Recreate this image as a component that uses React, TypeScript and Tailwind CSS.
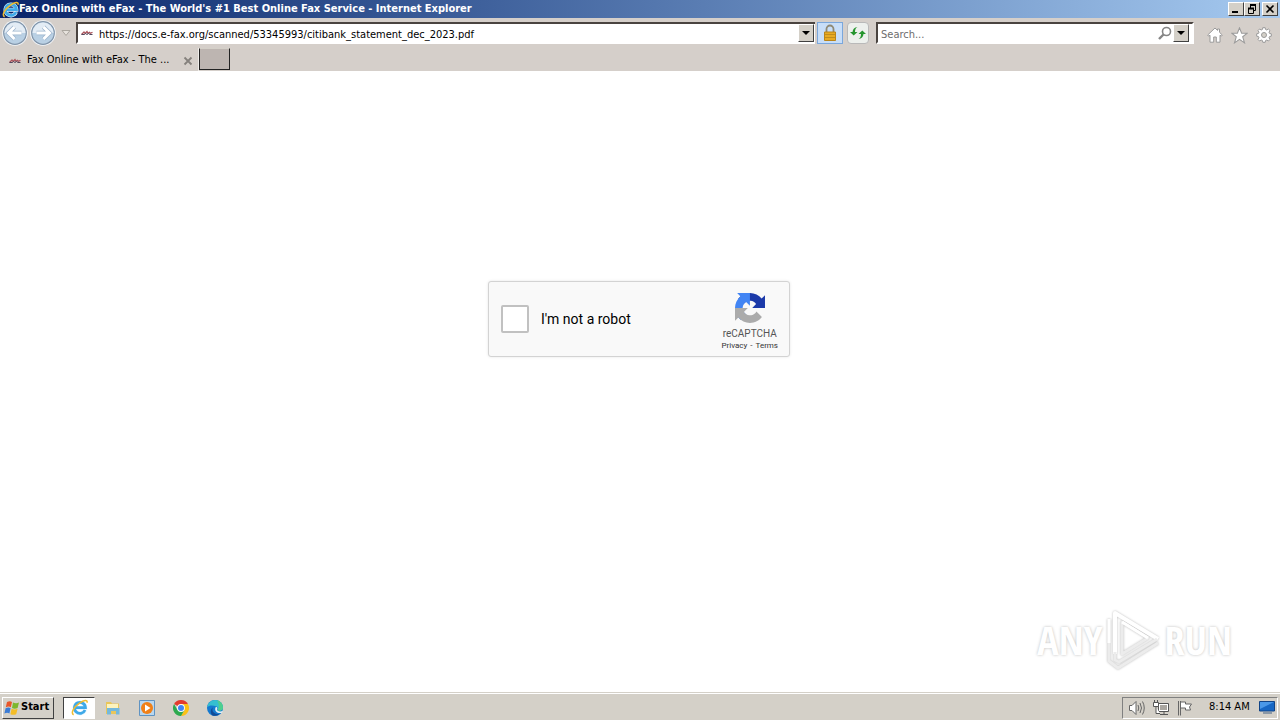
import { useState } from 'react';
import type { ReactNode } from 'react';

const raised = 'border border-t-white border-l-white border-r-[#404040] border-b-[#404040] bg-[#d4d0c8]';

function IeLogo({ className }: { className: string }) {
    return (
        <svg viewBox="0 0 16 16" className={className} aria-hidden="true">
            <path d="M13.2 10.400A5.200 5.200 0 1 1 13.600 8.200H4.500" fill="none" stroke="#e4f5ff" strokeWidth="3.600" />
            <path d="M13.2 10.400A5.200 5.200 0 1 1 13.600 8.200H4.500" fill="none" stroke="#3fa9e8" strokeWidth="2.600" />
            <path d="M2.500 14.800C-.6 13.500 2.500 7.500 8 3.800 12 1 16 .2 15 3.600" fill="none" stroke="#f0bc2e" strokeWidth="1.400" />
        </svg>
    );
}

function SiteIcon() {
    return (
        <svg viewBox="0 0 14 14" className="size-[14px] shrink-0" aria-hidden="true">
            <path d="M1.500 8.500L4 6l1 1.500L7 5.500l1 1.800 1.500-1 1 1 2-1" fill="none" stroke="#a8525a" strokeWidth="1.200" />
            <path d="M1.500 8.500h3l1-1 1.500 1 1.500-1 1.500 1h2.500" fill="none" stroke="#50485c" strokeWidth="1" />
        </svg>
    );
}

function NavButton({ label, flip }: { label: string; flip?: boolean }) {
    return (
        <button aria-label={label} className="size-[26px] shrink-0">
            <svg viewBox="0 0 26 26" className={flip ? 'size-full -scale-x-100' : 'size-full'}>
                <circle cx="13" cy="13" r="12.800" fill="#f6f9fc" />
                <circle cx="13" cy="13" r="11.300" fill="#b9d0e4" stroke="#8295aa" strokeWidth="1.200" />
                <path d="M2.500 13a10.500 10.500 0 0 1 21 0z" fill="#e3ecf5" />
                <path d="M12.500 7L6.500 13l6 6M7 13h12.500" fill="none" stroke="#9db4cc" strokeWidth="4.500" />
                <path d="M12.500 7L6.500 13l6 6M7 13h12.500" fill="none" stroke="#fff" strokeWidth="3" />
            </svg>
        </button>
    );
}

function DropButton({ label }: { label: string }) {
    return (
        <button aria-label={label} className={`flex h-[18px] w-4 shrink-0 items-center justify-center ${raised}`}>
            <svg viewBox="0 0 8 4" className="h-1 w-2">
                <path d="M0 0h8L4 4z" fill="#000" />
            </svg>
        </button>
    );
}

function CaptionButton({ label, children }: { label: string; children: ReactNode }) {
    return (
        <button aria-label={label} className={`flex h-[14px] w-4 items-center justify-center ${raised}`}>
            <svg viewBox="0 0 12 12" className="size-3 shrink-0" fill="none" stroke="#000">
                {children}
            </svg>
        </button>
    );
}

function TitleBar() {
    return (
        <header className="flex h-[18px] items-center bg-linear-to-r from-[#0a246a] to-[#a6caf0] pr-[2px] pl-[2px]">
            <IeLogo className="size-[17px] shrink-0" />
            <h1 className="flex-1 truncate text-[11px] leading-[18px] font-bold text-white">
                Fax Online with eFax - The World's #1 Best Online Fax Service - Internet Explorer
            </h1>
            <div className="flex">
                <CaptionButton label="Minimize">
                    <path d="M2 9h6" strokeWidth="2" />
                </CaptionButton>
                <CaptionButton label="Restore">
                    <path d="M4 2h6" strokeWidth="2" />
                    <path d="M4.500 2v3M9.500 2v5.500H7.500" />
                    <path d="M2 5.500h6" strokeWidth="2" />
                    <path d="M2.500 5.500v5h5v-5" />
                </CaptionButton>
                <div className="w-[2px]" />
                <CaptionButton label="Close">
                    <path d="M2.500 2.500l7 7M9.500 2.500l-7 7" strokeWidth="1.600" />
                </CaptionButton>
            </div>
        </header>
    );
}

function AddressRow() {
    return (
        <div className="flex h-[30px] items-center pr-2 pl-[2px]">
            <NavButton label="Back" />
            <div className="w-[2px]" />
            <NavButton label="Forward" flip />
            <button aria-label="Recent pages" className="flex w-5 shrink-0 justify-center">
                <svg viewBox="0 0 10 6" className="h-[6px] w-[10px]">
                    <path d="M1 .5h8l-4 5z" fill="#e6e2dc" stroke="#aaa69f" />
                </svg>
            </button>
            <div className="flex h-[22px] flex-1 items-center border-t-2 border-b-2 border-l-2 border-t-[#4a4440] border-b-white border-l-[#4a4440] bg-white pr-[1px] pl-[2px]">
                <SiteIcon />
                <input
                    aria-label="Address"
                    className="h-[18px] min-w-0 flex-1 bg-transparent pt-[2px] pl-[5px] text-[11px] text-black outline-none"
                    defaultValue="https://docs.e-fax.org/scanned/53345993/citibank_statement_dec_2023.pdf"
                />
                <DropButton label="Show addresses" />
            </div>
            <button aria-label="Security report" className="ml-[2px] flex h-[22px] w-[26px] shrink-0 items-center justify-center border border-[#7aa7dc] bg-[#c8def8]">
                <svg viewBox="0 0 16 18" className="h-[18px] w-4">
                    <path d="M4.500 9V5a3.500 3.500 0 0 1 7 0v4" fill="none" stroke="#8f8974" strokeWidth="1.800" />
                    <path d="M2.500 8h11v8.500h-11z" fill="#e8aa22" stroke="#b98419" />
                    <path d="M3 10.500h10M3 13.500h10" stroke="#c08d1c" />
                </svg>
            </button>
            <button aria-label="Refresh" className="ml-1 flex size-[22px] shrink-0 items-center justify-center rounded-sm border border-[#b9b9b9] bg-[#edf0ed]">
                <svg viewBox="0 0 18 16" className="h-4 w-[18px]" fill="#26952f">
                    <path d="M8.500 2Q6 3 6 7h2.500L4.700 10.500 1 7h2.500Q4 2.500 8.500 2z" />
                    <path d="M9.500 14q2.500-1 2.500-5H9.500l3.800-3.500L17 9h-2.500q-.5 4.500-5 5z" />
                </svg>
            </button>
            <div className="ml-[7px] flex h-[22px] w-[318px] shrink-0 items-center border-2 border-t-[#4a4440] border-r-white border-b-white border-l-[#4a4440] bg-white pr-[3px] pl-[3px]">
                <input aria-label="Search" placeholder="Search..." className="h-[18px] min-w-0 flex-1 bg-transparent pt-[2px] text-[11px] outline-none placeholder:text-[#6d6d6d]" />
                <button aria-label="Go" className="mr-[1px] size-[14px]">
                    <svg viewBox="0 0 14 14" fill="none" stroke="#858585">
                        <circle cx="8.500" cy="5.500" r="4" strokeWidth="1.600" />
                        <path d="M5.500 8.500L1 13" strokeWidth="2.400" />
                    </svg>
                </button>
                <DropButton label="Search options" />
            </div>
            <div className="ml-[13px] flex shrink-0 items-center gap-2 pt-1">
                <button aria-label="Home" className="size-4">
                    <svg viewBox="0 0 16 16" fill="#fff" stroke="#9a9a9a">
                        <path d="M8 1L.7 8l1 1.200L3 8.200v7h3.700V10h2.600v5.200H13v-7l1.300 1 1-1.200-2.800-2.700V2h-2v1.400z" />
                    </svg>
                </button>
                <button aria-label="Favorites" className="size-[17px]">
                    <svg viewBox="0 0 16 16" fill="#fff" stroke="#9a9a9a">
                        <path d="M8 .8l2 5h5.300L11 9.200l1.700 5.700L8 11.600l-4.700 3.300L5 9.200.7 5.800H6z" />
                    </svg>
                </button>
                <button aria-label="Tools" className="size-4">
                    <svg viewBox="0 0 16 16" fill="#fff" stroke="#9a9a9a">
                        <path d="M6.800.7h2.400l.4 1.800 1.200.5 1.600-1 1.600 1.600-1 1.600.5 1.200 1.800.4v2.400l-1.800.4-.5 1.200 1 1.600-1.600 1.600-1.600-1-1.200.5-.4 1.800H6.800l-.4-1.800-1.200-.5-1.600 1L2 12.400l1-1.600-.5-1.200L.7 9.200V6.800l1.800-.4L3 5.200 2 3.600 3.600 2l1.600 1 1.200-.5z" />
                        <circle cx="8" cy="8" r="2.500" fill="#d4d0c8" />
                    </svg>
                </button>
            </div>
        </div>
    );
}

function TabRow() {
    return (
        <nav className="flex h-[23px] items-stretch">
            <div className="flex w-[199px] items-center border-r border-[#efedea] pt-[2px] pr-[5px] pl-2">
                <SiteIcon />
                <a href="#page" className="ml-[5px] flex-1 truncate text-[11px] text-black">Fax Online with eFax - The ...</a>
                <button aria-label="Close tab" className="size-[10px]">
                    <svg viewBox="0 0 10 10">
                        <path d="M1.500 1.500l7 7M8.500 1.500l-7 7" stroke="#85817d" strokeWidth="1.800" />
                    </svg>
                </button>
            </div>
            <button aria-label="New tab" className="mb-[1px] w-[31px] border border-t-[#d4d0c8] border-r-[#222] border-b-[#222] border-l-[#222] bg-[#bdb5b1]" />
        </nav>
    );
}

function Captcha() {
    const [checked, setChecked] = useState(false);

    return (
        <div className="flex h-[76px] w-[302px] rounded-[3px] border border-[#d3d3d3] bg-[#f9f9f9] pr-[11px] pl-3 font-[Roboto,sans-serif] shadow-[0_0_3px_rgba(0,0,0,0.1)]">
            <label className="flex flex-1 items-center gap-3 text-sm text-black">
                <input
                    type="checkbox"
                    checked={checked}
                    onChange={(e) => setChecked(e.target.checked)}
                    className="size-7 appearance-none rounded-[2px] border-2 border-[#c1c1c1] bg-white checked:bg-[#4285f4]"
                />
                I'm not a robot
            </label>
            <div className="flex flex-col items-center pt-[11px] text-[#555]">
                <svg viewBox="0 0 64 64" className="size-[30px]" aria-hidden="true">
                    <path fill="#1c3aa9" d="M64 31.955l-.033-1.370V4.687l-7.160 7.160C50.948 4.674 42.033.093 32.050.093c-10.400 0-19.622 4.960-25.458 12.640l11.736 11.860a15.550 15.550 0 0 1 4.754-5.334c2.050-1.600 4.952-2.906 8.968-2.906.485 0 .86.057 1.135.163 4.976.393 9.288 3.140 11.828 7.124l-8.307 8.307L64 31.953" />
                    <path fill="#4285f4" d="M31.862.094l-1.370.033H4.594l7.160 7.160C4.580 13.147 0 22.060 0 32.046c0 10.400 4.960 19.622 12.640 25.458L24.500 45.768a15.550 15.550 0 0 1-5.334-4.754c-1.600-2.050-2.906-4.952-2.906-8.968 0-.485.057-.86.163-1.135.393-4.976 3.140-9.288 7.124-11.828l8.307 8.307L31.860.095" />
                    <path fill="#ababab" d="M.001 32.045l.033 1.370v25.898l7.160-7.160c5.860 7.173 14.774 11.754 24.760 11.754 10.400 0 19.622-4.960 25.458-12.640l-11.736-11.860a15.550 15.550 0 0 1-4.754 5.334c-2.050 1.600-4.952 2.906-8.968 2.906-.485 0-.86-.057-1.135-.163-4.976-.393-9.288-3.140-11.828-7.124l8.307-8.307c-10.522.040-22.400.066-27.295-.005" />
                </svg>
                <span className="mt-[5px] text-[10px] leading-[12px]">reCAPTCHA</span>
                <span className="flex gap-[3px] text-[8px] leading-[12px] text-[#333]">
                    <a href="#privacy">Privacy</a>
                    <span>-</span>
                    <a href="#terms">Terms</a>
                </span>
            </div>
        </div>
    );
}

function Watermark() {
    return (
        <div className="absolute right-12 bottom-5 flex items-center gap-[2px] font-['Open_Sans_Condensed','Roboto_Condensed','Liberation_Sans_Narrow',sans-serif] text-[40px] leading-[64px] font-bold text-white [text-shadow:0_0_3px_#bbb]">
            <span>ANY</span>
            <svg viewBox="0 0 58 64" className="h-16 w-[58px] drop-shadow-[0_0_1px_#bbb]" fill="none" aria-hidden="true">
                <path d="M11 46V5l43 26" stroke="#fff" strokeWidth="4" strokeLinejoin="round" />
                <path d="M5 11v42l9 7 40-25M11 44v8l4 2 38-23M18 46l26-16-26-16z" stroke="#ececec" strokeWidth="3" strokeLinejoin="round" />
                <path d="M5 11v24M18 14l26 16" stroke="#fff" strokeWidth="3" />
            </svg>
            <span>RUN</span>
        </div>
    );
}

function Taskbar() {
    return (
        <footer className="flex h-7 items-center border-t border-[#d4d0c8] bg-[#d4d0c8] px-[2px] pt-[2px] shadow-[inset_0_1px_0_#fff]">
            <button className={`flex h-[22px] w-[52px] items-center gap-[1px] pl-[1px] text-[11px] font-bold text-black ${raised}`}>
                <svg viewBox="0 0 16 16" className="size-4 shrink-0" aria-hidden="true">
                    <path d="M3 2q3-1.500 5 0L6.800 7.300q-2-1.500-5 0z" fill="#e8562a" />
                    <path d="M9 2.500q3 1.500 6 0L13.600 8q-3 1.300-5.600 0z" fill="#7db72f" />
                    <path d="M1.600 8.300q3-1.500 5 0L5.400 13.500q-2-1.500-5 0z" fill="#3a7bd5" />
                    <path d="M7.600 8.800q3 1.500 6 0L12.200 14.200q-3 1.300-5.800 0z" fill="#f4bd27" />
                </svg>
                Start
            </button>
            <div className="ml-[9px] flex items-center">
                <button aria-label="Internet Explorer" className="flex h-[22px] w-8 items-center justify-center border border-t-[#404040] border-r-white border-b-white border-l-[#404040] bg-white">
                    <IeLogo className="size-[17px]" />
                </button>
                <button aria-label="File Explorer" className="flex w-[35px] justify-center">
                    <svg viewBox="0 0 16 16" className="size-4">
                        <path d="M1 2h5l1 1.500h7V14H1z" fill="#e9c65b" />
                        <path d="M2 4h11v5H2z" fill="#fdf3bd" />
                        <path d="M2 8h12.500v6.500H11V11H6v3.500H2z" fill="#74b8dc" />
                    </svg>
                </button>
                <button aria-label="Media Player" className="flex w-[34px] justify-center">
                    <svg viewBox="0 0 16 16" className="size-4">
                        <path d="M.5.500h15v15H.500z" fill="#b9d7ef" stroke="#5f93c2" />
                        <circle cx="8" cy="8" r="6" fill="#f08018" />
                        <path d="M6 4.500L11.500 8 6 11.500z" fill="#fff" />
                    </svg>
                </button>
                <button aria-label="Chrome" className="flex w-[34px] justify-center">
                    <svg viewBox="0 0 16 16" className="size-4">
                        <path d="M8 8L1.070 4A8 8 0 0 1 14.930 4z" fill="#e33b2e" />
                        <path d="M8 8V4h6.930A8 8 0 0 1 8 16l3.500-6z" fill="#fbc116" />
                        <path d="M8 8l3.500 2L8 16A8 8 0 0 1 1.070 4L4.500 10z" fill="#2da94f" />
                        <circle cx="8" cy="8" r="3.900" fill="#fff" />
                        <circle cx="8" cy="8" r="3" fill="#4285f4" />
                    </svg>
                </button>
                <button aria-label="Edge" className="flex w-[34px] justify-center">
                    <svg viewBox="0 0 16 16" className="size-4">
                        <circle cx="8" cy="8" r="8" fill="#1479cf" />
                        <path d="M.1 7A8 8 0 0 1 16 7.500c0 3-3.500 3.800-5.500 2.700.8-1 .7-3.200-1.500-4C6 5 2 5 .1 7z" fill="#35bfd0" />
                        <path d="M10 .3A8 8 0 0 1 16 7.500c0 3-3.500 3.800-5.500 2.700 2-2 2-6-.5-9.900z" fill="#4fcf8e" />
                        <path d="M6 7.500c-2 3 1 7 6.500 6.500A8 8 0 0 1 6 15.700C3 14 3 9 6 7.500z" fill="#124b96" />
                        <path d="M8.500 7.500c1.500-1.300 2.500 1 1.500 2.500.5 1.500 3.500 2 6 .8l-1 2c-4 1-8-1.300-6.500-5.300z" fill="#e3f1f6" />
                    </svg>
                </button>
            </div>
            <div className="ml-auto flex h-[22px] w-[156px] items-center border border-t-[#808080] border-r-white border-b-white border-l-[#808080] pl-[6px]">
                <svg viewBox="0 0 16 16" className="size-4" fill="#fff" stroke="#666" role="img" aria-label="Volume">
                    <path d="M.5 5.500H3l4-4v13l-4-4H.500z" />
                    <path d="M9 5q1.500 3 0 6M11 3q3 5 0 10M13.500 1.500q3.500 6.500 0 13" fill="none" />
                </svg>
                <svg viewBox="0 0 16 16" className="ml-2 size-4" fill="#fff" stroke="#555" role="img" aria-label="Network">
                    <path d="M5.500 3.500h10v8h-10z" />
                    <path d="M7 5h7v5H7z" fill="#aaa6a0" stroke="none" />
                    <path d="M7 14.500h8M11 12v2" />
                    <path d="M.5 2.500h5v4h-5zM1.500 0v2.500M4.500 0v2.500M3 6.500v7h4" />
                </svg>
                <svg viewBox="0 0 16 16" className="ml-2 size-4" fill="#fff" stroke="#666" role="img" aria-label="Action Center">
                    <path d="M1.500 1v14.500M3.500 1v14.500M3.500 2h5v2h6l-2 3 1 3H8.500V8h-5z" />
                </svg>
                <time className="flex-1 pl-4 text-[11px] whitespace-nowrap text-black">8:14 AM</time>
                <svg viewBox="0 0 16 14" className="mr-[2px] h-[14px] w-4 shrink-0" role="img" aria-label="Show desktop">
                    <path d="M.5.500h15v9.500H.500z" fill="#1767c4" stroke="#114487" />
                    <path d="M1 1h14L1 8z" fill="#4a98e8" />
                    <path d="M4 12h9" stroke="#8b98a6" strokeWidth="2" />
                </svg>
            </div>
        </footer>
    );
}

export default function App() {
    return (
        <div className="flex min-h-screen flex-col bg-[#d4d0c8] font-['DejaVu_Sans_Condensed','DejaVu_Sans',sans-serif]">
            <TitleBar />
            <div className="bg-[#d5cfca]">
                <AddressRow />
                <TabRow />
            </div>
            <main id="page" className="relative flex flex-1 flex-col items-center bg-white pt-[210px] pr-[2px]">
                <Captcha />
                <Watermark />
            </main>
            <Taskbar />
        </div>
    );
}
